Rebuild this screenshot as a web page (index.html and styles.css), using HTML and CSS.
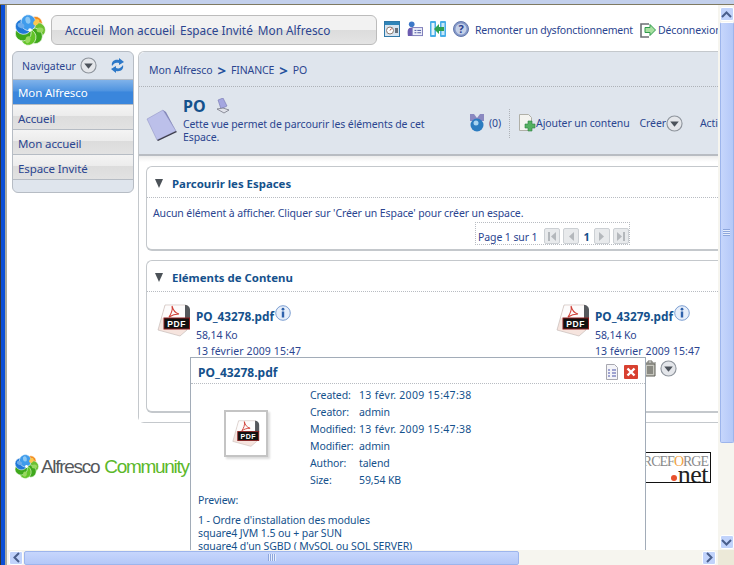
FILE: index.html
```html
<!DOCTYPE html>
<html>
<head>
    <title>Mon Alfresco - PO</title>
    <link rel="stylesheet" href="styles.css">
</head>
<body>
    <svg class="defs" width="0" height="0">
        <symbol id="flower" viewBox="0 0 32 32">
            <g stroke="#fff" stroke-width=".6">
                <ellipse cx="16" cy="8.500" rx="7.500" ry="8" fill="#f28a1c" transform="rotate(39 16 16)"/>
                <ellipse cx="16" cy="8.500" rx="7.500" ry="8" fill="#6cc030" transform="rotate(90 16 16)"/>
                <ellipse cx="16" cy="8.500" rx="7.500" ry="8" fill="#3fa81c" transform="rotate(141 16 16)"/>
                <ellipse cx="16" cy="8.500" rx="7.500" ry="8" fill="#62c428" transform="rotate(192 16 16)"/>
                <ellipse cx="16" cy="8.500" rx="7.500" ry="8" fill="#3fa81c" transform="rotate(244 16 16)"/>
                <ellipse cx="16" cy="8.500" rx="7.500" ry="8" fill="#1f78d8" transform="rotate(296 16 16)"/>
                <ellipse cx="16" cy="8.500" rx="7.500" ry="8" fill="#3f9cec" transform="rotate(348 16 16)"/>
            </g>
            <ellipse cx="16" cy="6" rx="2.500" ry="3.500" fill="#8cc8f4" transform="rotate(348 16 16)"/>
            <ellipse cx="16" cy="6" rx="2.500" ry="3.500" fill="#6cacec" transform="rotate(296 16 16)"/>
            <ellipse cx="16" cy="6" rx="2.500" ry="3.500" fill="#fcc850" transform="rotate(39 16 16)"/>
            <ellipse cx="16" cy="6" rx="2.500" ry="3.500" fill="#98d860" transform="rotate(90 16 16)"/>
            <ellipse cx="16" cy="6" rx="2.500" ry="3.500" fill="#98d860" transform="rotate(192 16 16)"/>
            <circle cx="16" cy="16" r="1.800" fill="#fff"/>
        </symbol>
        <symbol id="menu" viewBox="0 0 18 18">
            <circle cx="9" cy="9" r="8" fill="#e4e6ea" stroke="#8e949c" stroke-width="1.200"/>
            <path d="M4.500 7h9L9 12.500z" fill="#4c525a"/>
        </symbol>
        <symbol id="pdf" viewBox="0 0 34 34">
            <path d="M8 1h21v13h1v12l-7 6L1 26z" fill="#f6e4de" stroke="#bdb4b0" stroke-width=".6"/>
            <path d="M8.500 1.500H28V14H5z" fill="#fdfcfc"/>
            <path d="M28 1c3 0 5 2 5 5v8h-5z" fill="#55585c"/>
            <path d="M15 2c1 4 3 7 7 8-4 0-7 1-10 3 2-3 4-7 3-11z" fill="none" stroke="#d04038" stroke-width="1.100"/>
            <rect x="7" y="14" width="25.500" height="11" fill="#111" stroke="#8c1c1c"/>
            <text x="19.700" y="23" class="pdf-text">PDF</text>
        </symbol>
        <symbol id="info" viewBox="0 0 16 16">
            <circle cx="8" cy="8" r="7.300" fill="#e6eefa" stroke="#7d9fd2"/>
            <rect x="6.800" y="6.500" width="2.400" height="6" fill="#2f62ac"/>
            <circle cx="8" cy="4.200" r="1.400" fill="#2f62ac"/>
        </symbol>
    </svg>

    <div class="desk">
        <div class="desk-top"></div>
        <div class="desk-body">
            <div class="desk-edge"></div>
            <div class="viewport">
                <div class="page">
                    <header class="top">
                        <svg class="logo" width="32" height="32"><use href="#flower"/></svg>
                        <nav class="tools">
                            <a>Accueil</a><a>Mon accueil</a><a>Espace Invité</a><a>Mon Alfresco</a>
                        </nav>
                        <div class="top-icons">
                            <svg width="16" height="16" viewBox="0 0 16 16"><rect x=".5" y=".5" width="15" height="15" fill="#d8e4f0" stroke="#2f78a8"/><rect x="1" y="1" width="14" height="3" fill="#2f84b8"/><circle cx="6" cy="9.500" r="3.500" fill="#fff" stroke="#8a7a70"/><path d="M6 9.500l1.500-2" stroke="#c04030"/><rect x="11" y="7" width="3" height="5" fill="#68727c"/></svg>
                            <svg width="16" height="16" viewBox="0 0 17 17"><circle cx="5" cy="3.500" r="3" fill="#3c78c8"/><path d="M1 16c-1-6 0-9 4-9l2 1v8z" fill="#6c5cb0"/><rect x="5.500" y="7" width="11" height="8.500" fill="#eef0fa" stroke="#7a7ab8"/><path d="M8 10h2m1 0h4M8 12.500h2m1 0h4" stroke="#44509c"/></svg>
                            <svg width="16" height="16" viewBox="0 0 16 16"><rect width="6" height="16" rx="1" fill="#48aee8"/><rect x="1.500" y="2" width="3" height="12" fill="#e4f4fc"/><rect x="10" width="6" height="16" rx="1" fill="#48aee8"/><rect x="11.500" y="2" width="3" height="12" fill="#c8e8f8"/><path d="M4 8l5-5v3h5v4H9v3z" fill="#2fa050"/></svg>
                            <svg width="16" height="16" viewBox="0 0 16 16"><circle cx="8" cy="8" r="7.500" fill="#8498c8" stroke="#6478ac"/><circle cx="8" cy="8" r="5.500" fill="#c4d0e8"/><text x="8" y="12" class="qmark">?</text></svg>
                        </div>
                        <a class="report">Remonter un dysfonctionnement</a>
                        <a class="logout">
                            <svg width="16" height="16" viewBox="0 0 16 16"><path d="M9 2H1v13h8" fill="none" stroke="#6c7074" stroke-width="1.600"/><path d="M5 5.500h5V2.500L15.500 8 10 13.500v-3H5z" fill="#a8e0a0" stroke="#2f9a4c"/></svg>
                            Déconnexion
                        </a>
                    </header>

                    <div class="columns">
                        <aside class="side">
                            <div class="side-head">
                                <span>Navigateur</span>
                                <svg width="17" height="17"><use href="#menu"/></svg>
                                <svg class="refresh" width="17" height="17" viewBox="0 0 17 17"><path d="M3 9c-1-4 2-7 7-6V1l5 4-5 3V6C7 5 5 6 3 9zM14 8c1 4-2 7-7 6v2l-5-4 5-3v2c3 1 5 0 7-3z" fill="#2c78c8"/></svg>
                            </div>
                            <a class="side-link active">Mon Alfresco</a>
                            <a class="side-link">Accueil</a>
                            <a class="side-link">Mon accueil</a>
                            <a class="side-link">Espace Invité</a>
                            <div class="side-foot"></div>
                        </aside>

                        <main class="main">
                            <div class="crumbs">
                                <span>Mon Alfresco</span><b>&gt;</b><span>FINANCE</span><b>&gt;</b><span>PO</span>
                            </div>
                            <div class="space">
                                <svg class="space-icon" width="32" height="32" viewBox="0 0 32 32"><path d="M1 10L17 1l13 21-19 9z" fill="#bcc0ea" stroke="#8a8cc0" stroke-width=".5"/><path d="M11 31l19-9 1 1-19 9z" fill="#3c3c4c"/><path d="M17 1l3 2 10 19z" fill="#8084b8"/></svg>
                                <div class="space-text">
                                    <h1>PO <svg class="mail" width="16" height="16" viewBox="0 0 16 16"><path d="M3 2l5-2 4 8-6 3z" fill="#a4a6e0" stroke="#7476b0" stroke-width=".6"/><path d="M2 11l6-1 6 2-5 3z" fill="#e0e2ea" stroke="#686a78" stroke-width=".7"/></svg></h1>
                                    <p>Cette vue permet de parcourir les éléments de cet Espace.</p>
                                </div>
                                <div class="space-rules">
                                    <svg width="14" height="19" viewBox="0 0 14 19"><path d="M0 0h4l3 4 3-4h4v7H0z" fill="#8a88c0"/><circle cx="7" cy="11" r="6.500" fill="#2c7cc0"/><circle cx="6" cy="9" r="2.500" fill="#a8d4f0"/></svg>
                                    <span>(0)</span>
                                </div>
                                <div class="space-actions">
                                    <a><svg width="18" height="18" viewBox="0 0 18 18"><path d="M1.500.5h9l3 3v13h-12z" fill="#f4f4f0" stroke="#b0b0a8"/><path d="M10 7h4v3h3v4h-3v3h-4v-3H7v-4h3z" fill="#54b060" stroke="#2c8040" stroke-width=".6"/></svg>Ajouter un contenu</a>
                                    <a>Créer<svg width="17" height="17"><use href="#menu"/></svg></a>
                                    <a class="more">Actions</a>
                                </div>
                            </div>

                            <div class="body">
                                <section class="block">
                                    <h2 class="block-head"><i class="arrow"></i>Parcourir les Espaces</h2>
                                    <p class="empty">Aucun élément à afficher. Cliquer sur 'Créer un Espace' pour créer un espace.</p>
                                    <div class="pager">
                                        <span class="pager-label">Page 1 sur 1</span>
                                        <i class="pg"><svg width="11" height="11" viewBox="0 0 11 11"><path d="M1 1h2v9H1zM9 1v9L4 5.500z"/></svg></i>
                                        <i class="pg"><svg width="11" height="11" viewBox="0 0 11 11"><path d="M8 1v9L3 5.500z"/></svg></i>
                                        <b>1</b>
                                        <i class="pg"><svg width="11" height="11" viewBox="0 0 11 11"><path d="M3 1v9l5-4.500z"/></svg></i>
                                        <i class="pg"><svg width="11" height="11" viewBox="0 0 11 11"><path d="M2 1v9l5-4.500zM8 1h2v9H8z"/></svg></i>
                                    </div>
                                </section>

                                <section class="block files">
                                    <h2 class="block-head"><i class="arrow"></i>Eléments de Contenu</h2>
                                    <div class="file-grid">
                                        <div class="file">
                                            <svg class="file-icon" width="34" height="34"><use href="#pdf"/></svg>
                                            <div>
                                                <div class="file-name">PO_43278.pdf<svg width="16" height="16"><use href="#info"/></svg></div>
                                                <div class="file-line">58,14 Ko</div>
                                                <div class="file-line stamp">13 février 2009 15:47</div>
                                            </div>
                                        </div>
                                        <div class="file">
                                            <svg class="file-icon" width="34" height="34"><use href="#pdf"/></svg>
                                            <div>
                                                <div class="file-name">PO_43279.pdf<svg width="16" height="16"><use href="#info"/></svg></div>
                                                <div class="file-line">58,14 Ko</div>
                                                <div class="file-line stamp">13 février 2009 15:47</div>
                                                <div class="file-acts">
                                                    <svg width="14" height="17" viewBox="0 0 14 17"><path d="M1 3h12M5 3V1h4v2" fill="none" stroke="#6c6c64"/><path d="M2 4h10v12H2z" fill="#c8c8c0" stroke="#5c5c54"/><path d="M5 6v8M7 6v8M9 6v8" stroke="#4c4c44"/></svg>
                                                    <svg width="17" height="17"><use href="#menu"/></svg>
                                                </div>
                                            </div>
                                        </div>
                                    </div>
                                </section>
                            </div>
                        </main>
                    </div>

                    <footer class="foot">
                        <div class="community">
                            <svg width="25" height="25"><use href="#flower"/></svg>
                            <span class="c-grey">Alfresco</span><span class="c-green">Community</span>
                        </div>
                        <div class="forge">
                            <span class="forge-top">SOURCEF<em>O</em>RGE</span>
                            <span class="forge-net"><i></i>net</span>
                        </div>
                    </footer>

                    <div class="popup">
                        <div class="popup-head">
                            <span>PO_43278.pdf</span>
                            <svg width="12" height="16" viewBox="0 0 12 16"><path d="M.5.500h8l3 3v12H.500z" fill="#f4f4f8" stroke="#a8a8b0"/><path d="M2 6h2m2 0h4M2 9h2m2 0h4M2 12h2m2 0h4" stroke="#4a52a8"/></svg>
                            <svg width="14" height="14" viewBox="0 0 14 14"><rect width="14" height="14" rx="1" fill="#d84030"/><path d="M3.500 3.500l7 7m0-7l-7 7" stroke="#fff" stroke-width="2.400"/></svg>
                        </div>
                        <div class="popup-info">
                            <div class="thumb"><svg width="28" height="28" viewBox="0 0 34 34"><use href="#pdf"/></svg></div>
                            <dl class="meta">
                                <dt>Created:</dt><dd class="wide">13 févr. 2009 15:47:38</dd>
                                <dt>Creator:</dt><dd>admin</dd>
                                <dt>Modified:</dt><dd class="wide">13 févr. 2009 15:47:38</dd>
                                <dt>Modifier:</dt><dd>admin</dd>
                                <dt>Author:</dt><dd>talend</dd>
                                <dt>Size:</dt><dd>59,54 KB</dd>
                            </dl>
                        </div>
                        <p class="preview-label">Preview:</p>
                        <p class="preview">1 - Ordre d'installation des modules<br>square4 JVM 1.5 ou + par SUN<br>square4 d'un SGBD ( MySQL ou SQL SERVER)</p>
                    </div>
                </div>

                <div class="vbar">
                    <i class="sb-btn"><svg width="11" height="7" viewBox="0 0 11 7"><path d="M1 6l4.500-4.500L10 6" fill="none" stroke="#4a5f8c" stroke-width="2"/></svg></i>
                    <div class="v-thumb"><u></u></div>
                    <i class="sb-btn"><svg width="11" height="7" viewBox="0 0 11 7"><path d="M1 1l4.500 4.500L10 1" fill="none" stroke="#4a5f8c" stroke-width="2"/></svg></i>
                </div>
                <div class="hbar">
                    <i class="sb-btn"><svg width="7" height="11" viewBox="0 0 7 11"><path d="M6 1L1.500 5.500 6 10" fill="none" stroke="#4a5f8c" stroke-width="2"/></svg></i>
                    <div class="h-thumb"><u></u></div>
                    <i class="sb-btn"><svg width="7" height="11" viewBox="0 0 7 11"><path d="M1 1l4.500 4.500L1 10" fill="none" stroke="#4a5f8c" stroke-width="2"/></svg></i>
                </div>
                <div class="corner"></div>
            </div>
        </div>
    </div>
</body>
</html>
```

FILE: styles.css
```css
html, body {
    margin: 0;
    padding: 0;
    height: 100%;
    overflow: hidden;
}

body {
    font-family: "Noto Sans", sans-serif;
    font-size: 10.5px;
    letter-spacing: -.1px;
    color: #2b4590;
    background-color: #fff;
}

.defs {
    display: block;
    height: 0;
}

.desk {
    height: 565px;
    display: flex;
    flex-direction: column;
}

.desk-top {
    height: 5px;
    flex: none;
    box-sizing: border-box;
    background-color: #c3d0ec;
    border-bottom: 1px solid #7f7a62;
}

.desk-body {
    flex: 1;
    display: flex;
    min-height: 0;
}

.desk-edge {
    width: 7px;
    flex: none;
    box-sizing: border-box;
    background-color: #0a4ed6;
    border-left: 1px solid #333;
    border-right: 2px solid #a8a9a0;
}

.viewport {
    flex: 1;
    min-width: 0;
    display: grid;
    grid-template-columns: 1fr 16px;
    grid-template-rows: 1fr 15px;
}

.page {
    position: relative;
    overflow: hidden;
    min-width: 0;
    background-color: #fff;
}

/* cabecera */
.top {
    display: flex;
    align-items: center;
    height: 46px;
    width: 760px;
    box-sizing: border-box;
    padding: 3px 0 0 7px;
}

.logo {
    flex: none;
}

.tools {
    margin-left: 5px;
    width: 326px;
    height: 30px;
    box-sizing: border-box;
    flex: none;
    display: flex;
    align-items: center;
    gap: 5px;
    padding-left: 13px;
    border: 1px solid #bcbcbc;
    border-radius: 6px;
    background: linear-gradient(#f2f2f2 0, #f2f2f2 50%, #dcdcdc 50%, #e4e4e4 100%);
    font-size: 11.8px;
    letter-spacing: 0;
    color: #2b4590;
    white-space: nowrap;
}

.top-icons {
    display: flex;
    gap: 7px;
    align-items: center;
    margin: -2px 0 0 7px;
    flex: none;
}

.qmark {
    font-size: 11px;
    font-weight: bold;
    fill: #2c3f8c;
    text-anchor: middle;
}

.report {
    margin-left: 6px;
    letter-spacing: -.2px;
    white-space: nowrap;
}

.logout {
    margin-left: 7px;
    display: flex;
    align-items: center;
    gap: 2px;
    white-space: nowrap;
}

.columns {
    display: flex;
    align-items: flex-start;
    width: 760px;
    padding: 0 0 0 5px;
    gap: 4px;
}

/* navegador */
.side {
    width: 122px;
    flex: none;
    box-sizing: border-box;
    border: 1px solid #b6bcc4;
    border-radius: 6px;
    background-color: #dfe5ed;
    overflow: hidden;
}

.side-head {
    height: 27px;
    display: flex;
    align-items: center;
    padding-left: 9px;
    gap: 4px;
    border-bottom: 1px solid #b6bcc4;
}

.refresh {
    margin-left: 8px;
}

.side-link {
    display: flex;
    align-items: center;
    height: 22px;
    padding: 2px 0 0 5px;
    font-size: 11.5px;
    border-bottom: 1px solid #b6bcc4;
    background: linear-gradient(#f4f4f4 0, #ececec 45%, #dcdcdc 46%, #e2e2e2 100%);
}

.side-link.active {
    height: 24px;
    padding-top: 0;
    color: #fff;
    background: linear-gradient(#7fb2ea 0, #4f94e0 45%, #3a86dc 50%, #3a86dc 100%);
}

.side-foot {
    height: 12px;
}

/* panel principal */
.main {
    flex: 1;
    min-width: 0;
    box-sizing: border-box;
    border: 1px solid #c4c8cc;
    border-right: 0;
    border-radius: 6px 0 0 6px;
    background-color: #fff;
}

.crumbs {
    height: 32px;
    display: flex;
    align-items: center;
    gap: 5px;
    padding: 2px 0 0 10px;
    background-color: #dfe5ed;
    border-bottom: 1px dotted #aeb2b8;
    border-radius: 6px 0 0 0;
}

.crumbs b {
    font-size: 15px;
    line-height: 12px;
    color: #24509c;
}

.space {
    height: 69px;
    box-sizing: border-box;
    display: flex;
    align-items: center;
    background-color: #dfe5ed;
    border-bottom: 2px solid #b8bcc2;
    padding-left: 7px;
}

.space-icon {
    flex: none;
    margin-top: 8px;
}

.space-text {
    width: 262px;
    margin: -1px 0 0 5px;
    flex: none;
}

.space-text h1 {
    margin: 0;
    font-size: 16px;
    line-height: 19px;
    letter-spacing: 0;
    color: #14518c;
    display: flex;
    align-items: center;
    gap: 9px;
}

.space-text p {
    margin: 2px 0 0;
    line-height: 13px;
}

.space-rules {
    display: flex;
    align-items: center;
    gap: 5px;
    margin: 5px 0 0 25px;
    flex: none;
}

.space-actions {
    display: flex;
    align-items: center;
    margin: 5px 0 0 8px;
    padding-left: 8px;
    height: 29px;
    border-left: 1px dotted #aeb2b8;
    white-space: nowrap;
    flex: none;
}

.space-actions a {
    display: flex;
    align-items: center;
    margin-right: 10px;
}

.space-actions a.more {
    margin-left: 7px;
}

.body {
    padding: 10px 0 9px 7px;
    background: linear-gradient(#ececec, #fff 6px);
}

.block {
    border: 1px solid #c4c8cc;
    border-right: 0;
    border-bottom: 2px solid #c4c8cc;
    border-radius: 6px 0 0 6px;
    margin-bottom: 9px;
    height: 82px;
    background-color: #fff;
}

.block.files {
    height: 150px;
    margin-bottom: 0;
}

.block-head {
    margin: 0;
    height: 28px;
    display: flex;
    align-items: center;
    padding: 2px 0 0 8px;
    gap: 9px;
    font-size: 11.4px;
    letter-spacing: 0;
    font-weight: bold;
    color: #14518c;
    border-bottom: 1px dotted #b8bcc2;
}

.arrow {
    width: 0;
    height: 0;
    border-left: 4.5px solid transparent;
    border-right: 4.5px solid transparent;
    border-top: 9px solid #4c5258;
}

.empty {
    margin: 9px 0 0 6px;
    line-height: 13px;
    white-space: nowrap;
}

.pager {
    display: flex;
    align-items: flex-end;
    gap: 3px;
    margin: 2px 0 0 328px;
    width: 155px;
    height: 23px;
    box-sizing: border-box;
    border: 1px dotted #b8bcc2;
    padding: 0 0 0 2px;
    white-space: nowrap;
}

.pager-label {
    margin-right: 4px;
    line-height: 14px;
}

.pager b {
    color: #14518c;
    margin: 0 1px;
    font-size: 11px;
    line-height: 14px;
}

.pg {
    width: 16px;
    height: 16px;
    display: flex;
    align-items: center;
    justify-content: center;
    border: 1px solid #ccd0d4;
    border-radius: 2px;
    box-sizing: border-box;
    background-color: #e8eaec;
}

.pg svg {
    fill: #b4b8bc;
}

.file-grid {
    display: grid;
    grid-template-columns: 399px 200px;
    padding: 12px 0 0 10px;
}

.file {
    display: flex;
    gap: 5px;
    align-items: flex-start;
}

.file-icon {
    flex: none;
}

.pdf-text {
    font-family: "Liberation Sans", sans-serif;
    font-size: 8.5px;
    font-weight: bold;
    fill: #fff;
    letter-spacing: .6px;
    text-anchor: middle;
}

.file-name {
    display: flex;
    align-items: flex-start;
    height: 19px;
    padding-top: 4px;
    font-weight: bold;
    font-size: 11.8px;
    letter-spacing: 0;
    color: #14518c;
    line-height: 16px;
}

.file-name svg {
    margin: -3px 0 0 1px;
}

.file-line {
    line-height: 16px;
}

.stamp {
    letter-spacing: .1px;
}

.file-acts {
    display: flex;
    align-items: center;
    gap: 3px;
    margin: 1px 0 0 48px;
}

/* pie */
.foot {
    display: flex;
    justify-content: space-between;
    align-items: center;
    padding: 27px 0 0 7px;
    width: 704px;
    box-sizing: border-box;
}

.community {
    display: flex;
    align-items: center;
    gap: 2px;
    font-family: "Liberation Sans", sans-serif;
    font-size: 19px;
    letter-spacing: -1.3px;
}

.c-grey {
    color: #55585c;
}

.c-green {
    color: #5cb82a;
    margin-left: 3px;
}

.forge {
    width: 130px;
    height: 31px;
    margin-top: 2px;
    box-sizing: border-box;
    border: 1px solid #111;
    display: flex;
    flex-direction: column;
    align-items: flex-end;
    font-family: "Liberation Serif", serif;
    line-height: 1;
    padding-right: 2px;
    overflow: hidden;
}

.forge-top {
    font-size: 14px;
    color: #8a8a8a;
    letter-spacing: -1px;
    margin-top: 2px;
}

.forge-top em {
    font-style: normal;
    color: #f0a040;
}

.forge-net {
    font-size: 26px;
    line-height: 17px;
    letter-spacing: -.5px;
    color: #222;
    margin-top: -3px;
    display: flex;
    align-items: center;
    gap: 1px;
}

.forge-net i {
    width: 6px;
    height: 6px;
    margin-top: 6px;
    border-radius: 50%;
    background-color: #e8502c;
}

/* ventana emergente */
.popup {
    position: absolute;
    left: 183px;
    top: 352px;
    width: 456px;
    height: 210px;
    box-sizing: border-box;
    background-color: #fff;
    border: 1px solid #a2acb8;
    color: #14518c;
}

.popup-head {
    height: 22px;
    display: flex;
    align-items: center;
    gap: 6px;
    padding: 3px 7px 0;
    border-bottom: 1px dotted #b8bcc2;
    font-size: 12px;
    letter-spacing: 0;
    font-weight: bold;
}

.popup-head span {
    flex: 1;
}

.popup-info {
    display: flex;
    height: 105px;
    padding-top: 2px;
}

.thumb {
    width: 44px;
    height: 47px;
    margin: 24px 0 0 33px;
    display: flex;
    align-items: center;
    justify-content: center;
    background-color: #fff;
    border: 2px solid #c4c4c4;
    box-sizing: border-box;
    box-shadow: 2px 2px 2px #dcdcdc;
    flex: none;
}

.meta {
    margin: 0 0 0 42px;
    display: grid;
    grid-template-columns: 49px auto;
    grid-auto-rows: 17px;
    align-items: center;
}

.meta dd {
    margin: 0;
}

.meta dd.wide {
    letter-spacing: .3px;
}

.preview-label {
    margin: 2px 0 0 7px;
    line-height: 14px;
}

.preview {
    margin: 7px 0 0 7px;
    line-height: 13px;
}

/* barras de desplazamiento */
.vbar {
    display: flex;
    flex-direction: column;
    align-items: center;
    gap: 1px;
    padding: 2px 0 1px 1px;
    background-color: #f6f5ef;
    box-sizing: border-box;
}

.hbar {
    display: flex;
    align-items: center;
    gap: 1px;
    padding-left: 2px;
    background-color: #f6f5ef;
}

.sb-btn {
    width: 14px;
    height: 14px;
    flex: none;
    display: flex;
    align-items: center;
    justify-content: center;
    border: 1px solid #fff;
    border-radius: 2px;
    background-color: #c1d3fb;
    box-sizing: border-box;
}

.v-thumb {
    width: 14px;
    height: 421px;
    box-sizing: border-box;
    border-radius: 2px;
    border: 1px solid #9db5ec;
    border-top-color: #fff;
    background: linear-gradient(90deg, #c6d6fc, #b4c8f8);
    display: flex;
    align-items: center;
    justify-content: center;
}

.v-thumb u {
    width: 7px;
    height: 7px;
    background: repeating-linear-gradient(#8da6dc 0 1px, #e6edfc 1px 2px);
}

.h-thumb {
    width: 495px;
    height: 14px;
    box-sizing: border-box;
    border-radius: 2px;
    border: 1px solid #9db5ec;
    background: linear-gradient(#c6d6fc, #b4c8f8);
    display: flex;
    align-items: center;
    justify-content: center;
}

.h-thumb u {
    width: 8px;
    height: 7px;
    background: repeating-linear-gradient(90deg, #8da6dc 0 1px, #e6edfc 1px 2px);
}

.hbar .sb-btn:last-child {
    margin-left: auto;
    margin-right: 2px;
}

.vbar .sb-btn:last-child {
    margin-top: auto;
}

.corner {
    background-color: #ece9d8;
}
```
